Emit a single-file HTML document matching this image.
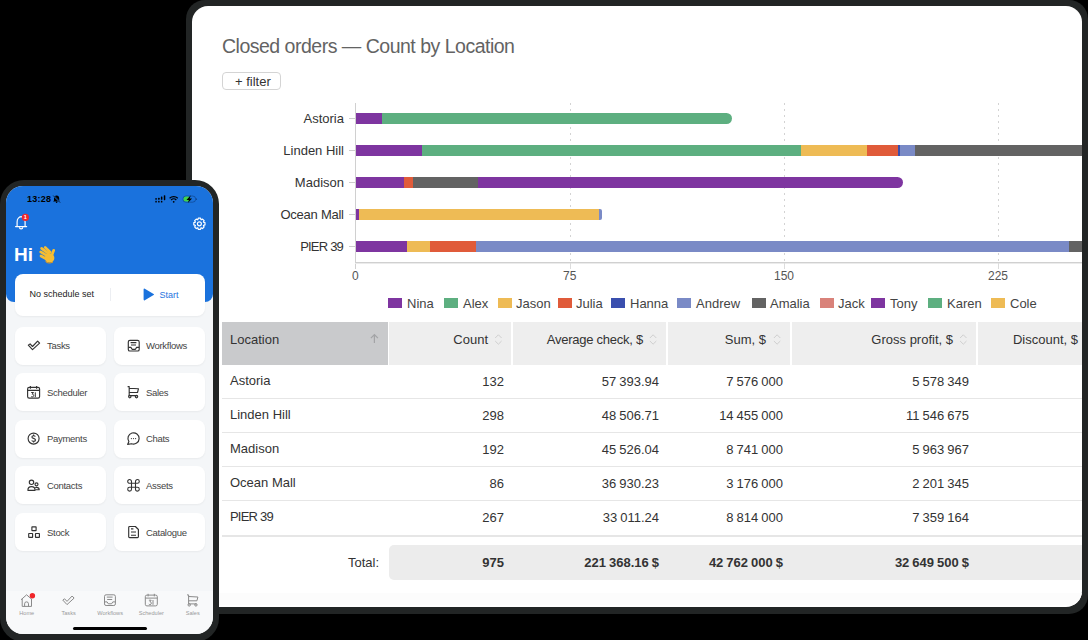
<!DOCTYPE html>
<html><head><meta charset="utf-8">
<style>
*{box-sizing:border-box;margin:0;padding:0}
html,body{width:1088px;height:640px;overflow:hidden;background:#000}
body{position:relative;font-family:"Liberation Sans",sans-serif;color:#333}
.a{position:absolute}
.t{position:absolute;white-space:nowrap;line-height:1}
#tab{left:186px;top:0;width:902px;height:614px;background:#222525;border-radius:19px}
#scr{left:192px;top:6px;width:890px;height:601px;background:#fff;border-radius:16px;overflow:hidden}
#w{left:-192px;top:-6px;width:1088px;height:640px}
.bar{position:absolute;height:11px;display:flex}
.bar i{display:block;height:11px}
.lg{position:absolute;top:298px;width:14px;height:10px}
.lt{position:absolute;top:297px;font-size:13px;line-height:1;white-space:nowrap;color:#444}
.hc{position:absolute;top:322px;height:43px;background:#eee}
.ht{position:absolute;top:333.4px;font-size:13px;line-height:1;white-space:nowrap;color:#333;text-align:right}
.rt{position:absolute;font-size:13px;line-height:1;white-space:nowrap;color:#333}
.num{text-align:right;word-spacing:-0.6px}
.div{position:absolute;left:222px;width:860px;height:1px;background:#e6e6e6}
.grid{position:absolute;top:103px;height:159px;width:1px;background:repeating-linear-gradient(to bottom,#d3d3d3 0,#d3d3d3 2px,transparent 2px,transparent 6px)}
</style></head>
<body>
<div id="tab" class="a"></div>
<div id="scr" class="a"><div id="w" class="a">
  <div class="t" style="left:222px;top:36.5px;font-size:19.5px;letter-spacing:-0.5px;color:#636363">Closed orders — Count by Location</div>
  <div class="a" style="left:222px;top:72px;width:59px;height:18px;border:1px solid #d4d4d4;border-radius:4px"></div>
  <div class="t" style="left:235px;top:74.5px;font-size:13px;color:#333">+ filter</div>

  <div class="a" style="left:192px;top:593px;width:890px;height:12px;background:#fcfcfc"></div>
  <!-- chart -->
  <div class="a" style="left:355px;top:103px;width:1px;height:166px;background:#d0d0d0"></div>
  <div class="a" style="left:355px;top:262px;width:727px;height:1px;background:#d0d0d0"></div><div class="a" style="left:355px;top:263px;width:727px;height:1px;background:#ebebeb"></div><div class="a" style="left:570px;top:263px;width:1px;height:6px;background:#dcdcdc"></div><div class="a" style="left:784px;top:263px;width:1px;height:6px;background:#dcdcdc"></div><div class="a" style="left:998px;top:263px;width:1px;height:6px;background:#dcdcdc"></div>
  <div class="grid" style="left:570px"></div>
  <div class="grid" style="left:784px"></div>
  <div class="grid" style="left:998px"></div>
  <div class="a" style="left:349px;top:118px;width:6px;height:1px;background:#ccc"></div>
  <div class="a" style="left:349px;top:150px;width:6px;height:1px;background:#ccc"></div>
  <div class="a" style="left:349px;top:182px;width:6px;height:1px;background:#ccc"></div>
  <div class="a" style="left:349px;top:214px;width:6px;height:1px;background:#ccc"></div>
  <div class="a" style="left:349px;top:246px;width:6px;height:1px;background:#ccc"></div>
  <div class="t" style="right:744px;top:112px;font-size:13px;color:#333">Astoria</div>
  <div class="t" style="right:744px;top:144px;font-size:13px;color:#333">Linden Hill</div>
  <div class="t" style="right:744px;top:176px;font-size:13px;color:#333">Madison</div>
  <div class="t" style="right:744.25px;top:208px;font-size:13px;letter-spacing:-0.25px;color:#333">Ocean Mall</div>
  <div class="t" style="right:745px;top:240px;font-size:13px;letter-spacing:-0.8px;color:#333">PIER 39</div>

  <div class="bar" style="left:356px;top:113px"><i style="width:26px;background:#7e35a0"></i><i style="width:350px;background:#5daf80;border-radius:0 6px 6px 0"></i></div>
  <div class="bar" style="left:356px;top:145px"><i style="width:66px;background:#7e35a0"></i><i style="width:379px;background:#5daf80"></i><i style="width:66px;background:#eebb55"></i><i style="width:31px;background:#e05b3a"></i><i style="width:2px;background:#3a4fae"></i><i style="width:15px;background:#7a8ac6"></i><i style="width:200px;background:#636363"></i></div>
  <div class="bar" style="left:356px;top:177px"><i style="width:48px;background:#7e35a0"></i><i style="width:9px;background:#e05b3a"></i><i style="width:65px;background:#636363"></i><i style="width:425px;background:#7e35a0;border-radius:0 6px 6px 0"></i></div>
  <div class="bar" style="left:356px;top:209px"><i style="width:3px;background:#7e35a0"></i><i style="width:240px;background:#eebb55"></i><i style="width:3px;background:#7a8ac6;border-radius:0 2px 2px 0"></i></div>
  <div class="bar" style="left:356px;top:241px"><i style="width:51px;background:#7e35a0"></i><i style="width:23px;background:#eebb55"></i><i style="width:46px;background:#e05b3a"></i><i style="width:593px;background:#7a8ac6"></i><i style="width:60px;background:#636363"></i></div>

  <div class="t" style="left:352px;top:270px;font-size:12px;color:#555">0</div>
  <div class="t" style="left:563px;top:270px;font-size:12px;color:#555">75</div>
  <div class="t" style="left:774px;top:270px;font-size:12px;color:#555">150</div>
  <div class="t" style="left:988px;top:270px;font-size:12px;color:#555">225</div>

  <!-- legend -->
  <div class="lg" style="left:388px;background:#7e35a0"></div><div class="lt" style="left:407px">Nina</div>
  <div class="lg" style="left:444px;background:#5daf80"></div><div class="lt" style="left:463px">Alex</div>
  <div class="lg" style="left:498px;background:#eebb55"></div><div class="lt" style="left:516px">Jason</div>
  <div class="lg" style="left:558px;background:#e05b3a"></div><div class="lt" style="left:576px">Julia</div>
  <div class="lg" style="left:611px;background:#3a4fae"></div><div class="lt" style="left:630px">Hanna</div>
  <div class="lg" style="left:677px;background:#7a8ac6"></div><div class="lt" style="left:696px">Andrew</div>
  <div class="lg" style="left:752px;background:#636363"></div><div class="lt" style="left:770px">Amalia</div>
  <div class="lg" style="left:820px;background:#d9827a"></div><div class="lt" style="left:838px">Jack</div>
  <div class="lg" style="left:871px;background:#7e35a0"></div><div class="lt" style="left:890px">Tony</div>
  <div class="lg" style="left:928px;background:#5daf80"></div><div class="lt" style="left:947px">Karen</div>
  <div class="lg" style="left:991px;background:#eebb55"></div><div class="lt" style="left:1010px">Cole</div>

  <!-- table header -->
  <div class="hc" style="left:222px;width:166px;background:#c9cacc"></div>
  <div class="hc" style="left:389px;width:122px"></div>
  <div class="hc" style="left:513px;width:153px"></div>
  <div class="hc" style="left:668px;width:122px"></div>
  <div class="hc" style="left:792px;width:184px"></div>
  <div class="hc" style="left:978px;width:110px"></div>
  <div class="ht" style="left:230px">Location</div>
  <div class="ht" style="right:600px">Count</div>
  <div class="ht" style="right:445px;letter-spacing:-0.25px">Average check, $</div>
  <div class="ht" style="right:322px">Sum, $</div>
  <div class="ht" style="right:135px">Gross profit, $</div>
  <div class="ht" style="right:10px">Discount, $</div>

  <svg class="a" style="left:0;top:0" width="1088" height="640">
   <path d="M374.4 343v-8.6M370.9 338.2l3.5-3.6 3.5 3.6" stroke="#a3a4a6" stroke-width="1.2" fill="none"/>
   <g stroke="#cfcfcf" stroke-width="1" fill="none">
    <path d="M495.2 338l3.2-3.2 3.2 3.2M495.2 341l3.2 3.2 3.2-3.2"/>
    <path d="M649.9 338l3.2-3.2 3.2 3.2M649.9 341l3.2 3.2 3.2-3.2"/>
    <path d="M773.9 338l3.2-3.2 3.2 3.2M773.9 341l3.2 3.2 3.2-3.2"/>
    <path d="M960.1 338l3.2-3.2 3.2 3.2M960.1 341l3.2 3.2 3.2-3.2"/>
   </g>
  </svg>
  <div class="div" style="top:398px"></div>
  <div class="div" style="top:432px"></div>
  <div class="div" style="top:466px"></div>
  <div class="div" style="top:500px"></div>
  <div class="div" style="top:535px;height:2px"></div>

  <div class="rt" style="left:230px;top:374px">Astoria</div>
  <div class="rt" style="left:230px;top:408px">Linden Hill</div>
  <div class="rt" style="left:230px;top:442px">Madison</div>
  <div class="rt" style="left:230px;top:476px">Ocean Mall</div>
  <div class="rt" style="left:230px;top:510px;letter-spacing:-0.8px">PIER 39</div>

  <div class="rt num" style="right:584px;top:375px">132</div>
  <div class="rt num" style="right:584px;top:409px">298</div>
  <div class="rt num" style="right:584px;top:443px">192</div>
  <div class="rt num" style="right:584px;top:477px">86</div>
  <div class="rt num" style="right:584px;top:511px">267</div>

  <div class="rt num" style="right:429px;top:375px">57 393.94</div>
  <div class="rt num" style="right:429px;top:409px">48 506.71</div>
  <div class="rt num" style="right:429px;top:443px">45 526.04</div>
  <div class="rt num" style="right:429px;top:477px">36 930.23</div>
  <div class="rt num" style="right:429px;top:511px">33 011.24</div>

  <div class="rt num" style="right:305px;top:375px">7 576 000</div>
  <div class="rt num" style="right:305px;top:409px">14 455 000</div>
  <div class="rt num" style="right:305px;top:443px">8 741 000</div>
  <div class="rt num" style="right:305px;top:477px">3 176 000</div>
  <div class="rt num" style="right:305px;top:511px">8 814 000</div>

  <div class="rt num" style="right:119px;top:375px">5 578 349</div>
  <div class="rt num" style="right:119px;top:409px">11 546 675</div>
  <div class="rt num" style="right:119px;top:443px">5 963 967</div>
  <div class="rt num" style="right:119px;top:477px">2 201 345</div>
  <div class="rt num" style="right:119px;top:511px">7 359 164</div>

  <div class="a" style="left:389px;top:545px;width:720px;height:35px;background:#ececec;border-radius:5px"></div>
  <div class="rt num" style="right:709px;top:556px">Total:</div>
  <div class="rt num" style="right:584px;top:556px;font-weight:bold">975</div>
  <div class="rt num" style="right:429px;top:556px;font-weight:bold">221 368.16 $</div>
  <div class="rt num" style="right:305px;top:556px;font-weight:bold">42 762 000 $</div>
  <div class="rt num" style="right:119px;top:556px;font-weight:bold">32 649 500 $</div>
</div></div>

<!-- phone -->
<div id="phone" class="a" style="left:0;top:180px;width:219px;height:462px;background:#222525;border-radius:24px"></div>
<div id="pscr" class="a" style="left:6px;top:186px;width:207px;height:448px;background:#f4f6f8;border-radius:17px;overflow:hidden">
 <div class="a" style="left:-6px;top:-186px;width:1088px;height:640px">
  <div class="a" style="left:6px;top:186px;width:207px;height:116px;background:#1a72dd;border-radius:0 0 8px 8px"></div>
  <div class="t" style="left:27px;top:195px;font-size:9px;letter-spacing:0.25px;font-weight:bold;color:#000">13:28</div>
  <div class="t" style="left:14px;top:245px;font-size:19px;font-weight:bold;color:#fff">Hi</div>
  <div class="a" style="left:15px;top:274px;width:190px;height:42px;background:#fff;border-radius:8px;box-shadow:0 1px 2px rgba(0,0,0,0.05)"></div>
  <div class="t" style="left:29.5px;top:290px;font-size:9px;color:#222">No schedule set</div>
  <div class="a" style="left:109.5px;top:288px;width:1px;height:13px;background:#eceef2"></div>
  <div class="t" style="left:159.5px;top:291px;font-size:9px;color:#1f74de">Start</div>
  <div class="a" style="left:15px;top:327px;width:91px;height:38px;background:#fff;border-radius:8px;box-shadow:0 1px 2px rgba(0,0,0,0.05)"></div>
  <div class="a" style="left:114px;top:327px;width:91px;height:38px;background:#fff;border-radius:8px;box-shadow:0 1px 2px rgba(0,0,0,0.05)"></div>
  <div class="a" style="left:15px;top:373px;width:91px;height:38px;background:#fff;border-radius:8px;box-shadow:0 1px 2px rgba(0,0,0,0.05)"></div>
  <div class="a" style="left:114px;top:373px;width:91px;height:38px;background:#fff;border-radius:8px;box-shadow:0 1px 2px rgba(0,0,0,0.05)"></div>
  <div class="a" style="left:15px;top:420px;width:91px;height:38px;background:#fff;border-radius:8px;box-shadow:0 1px 2px rgba(0,0,0,0.05)"></div>
  <div class="a" style="left:114px;top:420px;width:91px;height:38px;background:#fff;border-radius:8px;box-shadow:0 1px 2px rgba(0,0,0,0.05)"></div>
  <div class="a" style="left:15px;top:466px;width:91px;height:38px;background:#fff;border-radius:8px;box-shadow:0 1px 2px rgba(0,0,0,0.05)"></div>
  <div class="a" style="left:114px;top:466px;width:91px;height:38px;background:#fff;border-radius:8px;box-shadow:0 1px 2px rgba(0,0,0,0.05)"></div>
  <div class="a" style="left:15px;top:513px;width:91px;height:38px;background:#fff;border-radius:8px;box-shadow:0 1px 2px rgba(0,0,0,0.05)"></div>
  <div class="a" style="left:114px;top:513px;width:91px;height:38px;background:#fff;border-radius:8px;box-shadow:0 1px 2px rgba(0,0,0,0.05)"></div>
  <div class="t" style="left:47px;top:341px;font-size:9.5px;letter-spacing:-0.3px;color:#444">Tasks</div>
  <div class="t" style="left:146px;top:341px;font-size:9.5px;letter-spacing:-0.3px;color:#444">Workflows</div>
  <div class="t" style="left:47px;top:387.6px;font-size:9.5px;letter-spacing:-0.3px;color:#444">Scheduler</div>
  <div class="t" style="left:146px;top:387.6px;font-size:9.5px;letter-spacing:-0.3px;color:#444">Sales</div>
  <div class="t" style="left:47px;top:434.2px;font-size:9.5px;letter-spacing:-0.3px;color:#444">Payments</div>
  <div class="t" style="left:146px;top:434.2px;font-size:9.5px;letter-spacing:-0.3px;color:#444">Chats</div>
  <div class="t" style="left:47px;top:480.8px;font-size:9.5px;letter-spacing:-0.3px;color:#444">Contacts</div>
  <div class="t" style="left:146px;top:480.8px;font-size:9.5px;letter-spacing:-0.3px;color:#444">Assets</div>
  <div class="t" style="left:47px;top:528px;font-size:9.5px;letter-spacing:-0.3px;color:#444">Stock</div>
  <div class="t" style="left:146px;top:528px;font-size:9.5px;letter-spacing:-0.3px;color:#444">Catalogue</div>
  <div class="a" style="left:6px;top:591px;width:207px;height:50px;background:#f8f9fa"></div>
  <svg class="a" style="left:0;top:0" width="1088" height="640" viewBox="0 0 1088 640">
   <!-- status bell slash -->
   <path d="M56.6 195.6c-1.6 0-2.6 1.2-2.6 2.8v2l-0.9 1h7l-0.9-1v-2c0-1.6-1-2.8-2.6-2.8z" fill="#000"/>
   <circle cx="56.6" cy="202.3" r="0.8" fill="#000"/>
   <path d="M53.3 195.6l6.8 7" stroke="#1a72dd" stroke-width="1.4"/><path d="M53.3 195.6l6.8 7" stroke="#000" stroke-width="0.7"/>
   <!-- signal -->
   <g fill="#000">
    <rect x="155.3" y="197.9" width="1.5" height="1.8" rx="0.5"/><rect x="155.3" y="200.7" width="1.5" height="1.8" rx="0.5"/>
    <rect x="158.1" y="197.7" width="1.5" height="2" rx="0.5"/><rect x="158.1" y="200.7" width="1.5" height="1.8" rx="0.5"/>
    <rect x="160.9" y="196.6" width="1.5" height="3.1" rx="0.5"/><rect x="160.9" y="200.7" width="1.5" height="1.8" rx="0.5"/>
    <rect x="163.8" y="195.2" width="1.5" height="5" rx="0.6"/>
   </g>
   <!-- wifi -->
   <path d="M169.6 198.3a6 6 0 0 1 8.2 0" stroke="#000" stroke-width="1.2" fill="none"/>
   <path d="M171.1 200a3.7 3.7 0 0 1 5.2 0" stroke="#000" stroke-width="1.2" fill="none"/>
   <circle cx="173.7" cy="201.8" r="0.9" fill="#000"/>
   <!-- battery -->
   <rect x="182.9" y="196" width="12.8" height="6.2" rx="3.1" fill="none" stroke="#0d3f82" stroke-width="0.6"/>
   <rect x="183.5" y="196.6" width="6.8" height="5" rx="2.5" fill="#3fd24a"/>
   <path d="M196.2 198.3v1.8a0.9 0.9 0 0 0 0-1.8z" fill="#0d3f82"/>
   <path d="M190.8 195.3l-4.3 4.6h2.4l-1.1 3.1 4.3-4.6h-2.4z" fill="#000"/>
   <!-- bell -->
   <path d="M17.1 226.5v-4.6c0-2.6 1.8-4.9 4-5.2 2.2 0.3 4 2.6 4 5.2v4.6" fill="none" stroke="#fff" stroke-width="1.2"/>
   <path d="M15.6 226.6h11" stroke="#fff" stroke-width="1.3" stroke-linecap="round"/>
   <path d="M19.4 227.2a1.7 1.7 0 0 0 3.4 0" fill="none" stroke="#fff" stroke-width="1.1"/>
   <circle cx="25.4" cy="217.4" r="3.6" fill="#f0262a"/>
   <text x="25.3" y="219.4" font-family="Liberation Sans" font-size="5.5" font-weight="bold" fill="#fff" text-anchor="middle">1</text>
   <!-- gear -->
   <g transform="translate(199.4 223.8)" fill="none" stroke="#fff" stroke-width="1.2" stroke-linejoin="round">
    <path d="M4.12 -1.55 L5.59 -1.13 L5.59 1.13 L4.12 1.55 L4.01 1.82 L4.75 3.15 L3.15 4.75 L1.82 4.01 L1.55 4.12 L1.13 5.59 L-1.13 5.59 L-1.55 4.12 L-1.82 4.01 L-3.15 4.75 L-4.75 3.15 L-4.01 1.82 L-4.12 1.55 L-5.59 1.13 L-5.59 -1.13 L-4.12 -1.55 L-4.01 -1.82 L-4.75 -3.15 L-3.15 -4.75 L-1.82 -4.01 L-1.55 -4.12 L-1.13 -5.59 L1.13 -5.59 L1.55 -4.12 L1.82 -4.01 L3.15 -4.75 L4.75 -3.15 L4.01 -1.82z"/>
    <circle cx="0" cy="0" r="2"/>
   </g>
   <!-- wave emoji -->
   <g stroke="#f6bd32" stroke-width="2.7" stroke-linecap="round" fill="none">
    <path d="M41 256l6 3.2"/>
    <path d="M40.7 251.9l7 4.3"/>
    <path d="M41.6 248.4l7 5.2"/>
    <path d="M45.2 247.4l5 4.8"/>
    <path d="M53.7 250.3l-2 5.4"/>
   </g>
   <ellipse cx="49.6" cy="258" rx="4.8" ry="4.6" fill="#f6bd32"/>
   <path d="M45.5 261.5c1.5 1.6 4.5 2.2 7.5 0.5" stroke="#e39a1e" stroke-width="1" fill="none"/>
   <!-- play -->
   <path d="M143.6 289.4v10.2a0.8 0.8 0 0 0 1.2 0.6l8.8-5.1a0.7 0.7 0 0 0 0-1.2l-8.8-5.1a0.8 0.8 0 0 0-1.2 0.6z" fill="#1a72dd"/>
   <g fill="none" stroke="#333" stroke-width="1.15" stroke-linejoin="round">
    <!-- tasks -->
    <path d="M28.3 345.2l1.8-1.3 2.4 2.6 5.1-5.4 2 2.1-7.1 6.5z"/>
    <!-- workflows -->
    <rect x="128.3" y="340.3" width="10.9" height="10.7" rx="1.6"/>
    <path d="M130.6 342.6h5.8M131 345h5M128.3 347.4h2.6l1.2 1.9h3.3l1.2-1.9h2.6"/>
    <!-- calendar -->
    <rect x="27.6" y="387.4" width="12" height="10.8" rx="1.6"/>
    <path d="M27.6 390.4h12M30.4 386.1v2.6M36.6 386.1v2.6"/>
    <!-- cart -->
    <path d="M127.6 386.6h1.6v9h8M129.2 388.2l9.3 0.5-1 3.8h-8.3"/>
    <circle cx="129.8" cy="396.6" r="1.2"/>
    <circle cx="136.5" cy="396.6" r="1.2"/>
    <!-- payments -->
    <circle cx="33.6" cy="438.6" r="5.5"/>
    <path d="M35.4 436.5c-0.4-0.6-1-0.8-1.8-0.8-1 0-1.7 0.5-1.7 1.3 0 1.8 3.6 1 3.6 3 0 0.8-0.8 1.4-1.9 1.4-0.8 0-1.5-0.3-1.9-0.9M33.6 434.6v1.1M33.6 441.4v1.2"/>
    <!-- chats -->
    <path d="M128.9 441.6A5.6 5.6 0 1 1 131.6 443.7L127.6 444.4z"/>
    <!-- contacts -->
    <circle cx="31.5" cy="482.3" r="2.2"/>
    <path d="M27.9 490.3c0-2.3 1.6-3.6 3.6-3.6s3.6 1.3 3.6 3.6z"/>
    <circle cx="36.5" cy="484.3" r="1.5"/>
    <path d="M35.2 487.6c0.4-0.2 0.8-0.3 1.3-0.3 1.5 0 2.7 1 2.7 2.4h-3.8"/>
    <!-- assets -->
    <path d="M131.5 483.3v4M135.5 483.3v4M131.5 483.3h4M131.5 487.3h4M131.5 483.3h-1.8a1.9 1.9 0 1 1 1.8-1.9zM135.5 483.3v-1.9a1.9 1.9 0 1 1 1.9 1.9zM135.5 487.3h1.9a1.9 1.9 0 1 1-1.9 1.9zM131.5 487.3v1.9a1.9 1.9 0 1 1-1.9-1.9z" stroke-width="1.1"/>
    <!-- stock -->
    <rect x="31.9" y="526.8" width="4.2" height="3.8" rx="0.3"/>
    <rect x="28.7" y="533.5" width="3.9" height="3.8" rx="0.3"/>
    <rect x="35.5" y="533.5" width="3.9" height="3.8" rx="0.3"/>
    <!-- catalogue -->
    <path d="M128.7 527.4a0.9 0.9 0 0 1 0.9-0.9h5.8l3 3v7.2a0.9 0.9 0 0 1-0.9 0.9h-7.9a0.9 0.9 0 0 1-0.9-0.9z"/>
    <path d="M131 528.8h2.4M131 532h5M131 535.2h5"/>
   </g>
   <g fill="#333"><circle cx="131.4" cy="438.6" r="0.6"/><circle cx="133.5" cy="438.6" r="0.6"/><circle cx="135.6" cy="438.6" r="0.6"/></g>
   <path d="M31.2 392.5h2.3l-1.3 1.7c1 0 1.5 0.5 1.5 1.3 0 0.8-0.6 1.4-1.4 1.4-0.5 0-0.9-0.2-1.2-0.5M35.3 392.3v4.8" stroke="#333" stroke-width="1" fill="none"/>
  
   <g fill="none" stroke="#8a8a8a" stroke-width="1" stroke-linejoin="round">
    <path d="M21 599.8l5.6-5 5 4.4M22.2 598.8v7.6h9.3v-7.6M24.6 606.4v-2.6a1.95 1.95 0 0 1 3.9 0v2.6"/>
    <g transform="translate(34.5 254.9)"><path d="M28.3 345.2l1.8-1.3 2.4 2.6 5.1-5.4 2 2.1-7.1 6.5z"/></g>
    <g transform="translate(-23.8 254.5)"><rect x="128.3" y="340.3" width="10.9" height="10.7" rx="1.6"/><path d="M130.6 342.6h5.8M131 345h5M128.3 347.4h2.6l1.2 1.9h3.3l1.2-1.9h2.6"/></g>
    <g transform="translate(117.7 207.7)"><rect x="27.6" y="387.4" width="12" height="10.8" rx="1.6"/><path d="M27.6 390.4h12M30.4 386.1v2.6M36.6 386.1v2.6"/></g>
    <g transform="translate(59.4 208.3)"><path d="M127.6 386.6h1.6v9h8M129.2 388.2l9.3 0.5-1 3.8h-8.3"/><circle cx="129.8" cy="396.6" r="1.2"/><circle cx="136.5" cy="396.6" r="1.2"/></g>
   </g>
   <path transform="translate(117.7 207.7)" d="M31.2 392.5h2.3l-1.3 1.7c1 0 1.5 0.5 1.5 1.3 0 0.8-0.6 1.4-1.4 1.4-0.5 0-0.9-0.2-1.2-0.5M35.3 392.3v4.8" stroke="#8a8a8a" stroke-width="1" fill="none"/>
   <circle cx="32.4" cy="595.7" r="2.7" fill="#f0262a"/>
   <g font-family="Liberation Sans" font-size="5.6" fill="#9a9a9a" text-anchor="middle">
    <text x="26.7" y="615">Home</text><text x="68.6" y="615">Tasks</text><text x="110.1" y="615">Workflows</text><text x="151.3" y="615">Scheduler</text><text x="192.7" y="615">Sales</text>
   </g>
  </svg>

  <div class="a" style="left:73px;top:627px;width:74px;height:3px;background:#000;border-radius:2px"></div>
 </div>
</div>
</body></html>
